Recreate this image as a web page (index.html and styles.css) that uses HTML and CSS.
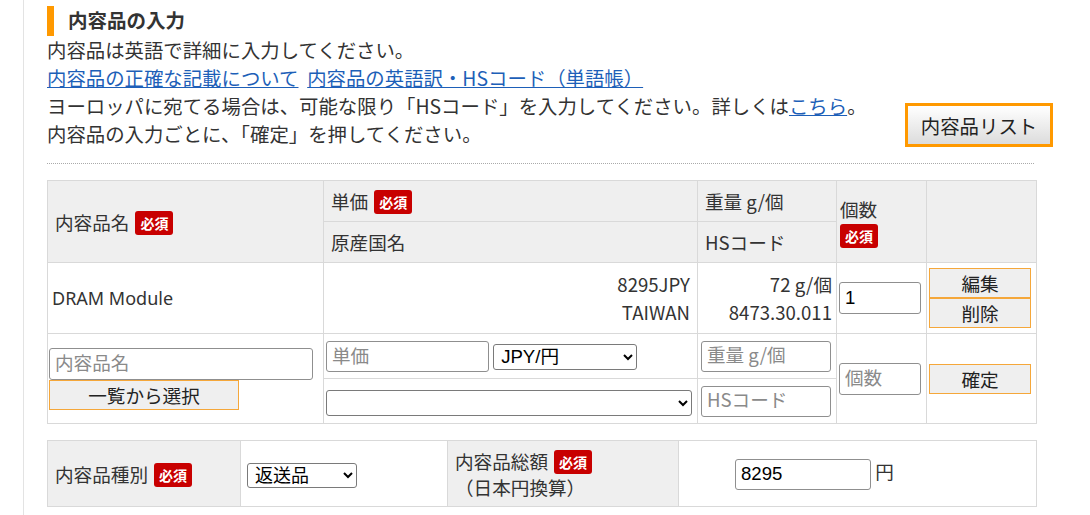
FILE: index.html
```html
<!DOCTYPE html>
<html lang="ja">
<head>
	<meta charset="utf-8">
	<title>内容品の入力</title>
	<link rel="stylesheet" href="styles.css">
</head>
<body>

<div class="page">
	<h2 class="ttl">内容品の入力</h2>

	<div class="intro">
		<div class="intro-text">
			<p>内容品は英語で詳細に入力してください。</p>
			<p><a href="#">内容品の正確な記載について</a>&nbsp; <a href="#">内容品の英語訳・HSコード（単語帳）</a></p>
			<p>ヨーロッパに宛てる場合は、可能な限り「HSコード」を入力してください。詳しくは<a href="#">こちら</a>。</p>
			<p>内容品の入力ごとに、「確定」を押してください。</p>
		</div>
		<button class="list-btn" type="button">内容品リスト</button>
	</div>

	<div class="divider"></div>

	<table class="items">
		<colgroup>
			<col class="c-name">
			<col class="c-price">
			<col class="c-weight">
			<col class="c-qty">
			<col class="c-act">
		</colgroup>
		<tr class="head1">
			<th rowspan="2">内容品名<span class="req">必須</span></th>
			<th>単価<span class="req">必須</span></th>
			<th>重量 g/個</th>
			<th rowspan="2" class="qty-head">個数<br><span class="req req-block">必須</span></th>
			<th rowspan="2"></th>
		</tr>
		<tr class="head2">
			<th>原産国名</th>
			<th>HSコード</th>
		</tr>
		<tr class="data">
			<td class="name">DRAM Module</td>
			<td class="num">8295JPY<br>TAIWAN</td>
			<td class="num num-w">72 g/個<br>8473.30.011</td>
			<td class="qty"><input class="inp inp-qty" type="text" value="1"></td>
			<td class="act">
				<button class="sub-btn" type="button">編集</button>
				<button class="sub-btn" type="button">削除</button>
			</td>
		</tr>
		<tr class="entry1">
			<td rowspan="2" class="name-entry">
				<input class="inp inp-name" type="text" placeholder="内容品名">
				<button class="sub-btn pick-btn" type="button">一覧から選択</button>
			</td>
			<td class="price-entry">
				<input class="inp inp-price" type="text" placeholder="単価">
				<select class="sel sel-cur"><option>JPY/円</option></select>
			</td>
			<td class="w-entry"><input class="inp inp-w" type="text" placeholder="重量 g/個"></td>
			<td rowspan="2" class="qty"><input class="inp inp-qty" type="text" placeholder="個数"></td>
			<td rowspan="2" class="act"><button class="sub-btn" type="button">確定</button></td>
		</tr>
		<tr class="entry2">
			<td class="price-entry"><select class="sel sel-country"><option></option></select></td>
			<td class="w-entry"><input class="inp inp-w inp-hs" type="text" placeholder="HSコード"></td>
		</tr>
	</table>

	<table class="total">
		<colgroup>
			<col class="t1">
			<col class="t2">
			<col class="t3">
			<col class="t4">
		</colgroup>
		<tr>
			<th>内容品種別<span class="req">必須</span></th>
			<td class="kind"><select class="sel sel-kind"><option>返送品</option></select></td>
			<th class="sum-head">内容品総額<span class="req">必須</span><br>（日本円換算）</th>
			<td class="sum"><input class="inp inp-sum" type="text" value="8295"> 円</td>
		</tr>
	</table>
</div>

<script>
	document.querySelectorAll('a').forEach(function(a){
		a.onclick = function(){ return false };
	});
</script>

</body>
</html>
```

FILE: styles.css
```css
html, body {
	margin: 0;
	padding: 0;
	background: #fff;
}
body {
	color: #333;
	font-family: "Noto Sans CJK JP", "Noto Sans", sans-serif;
	font-size: 18.6px;
}
.page {
	box-sizing: border-box;
	min-height: 515px;
	margin-left: 23px;
	padding: 6px 0 0 23px;
	border-left: 1px solid #e3e3e3;
}
.ttl {
	height: 30px;
	margin: 0;
	padding-left: 14px;
	font-size: 19.5px;
	font-weight: bold;
	line-height: 28px;
	color: #333;
	border-left: 7px solid #f90;
}
.intro {
	display: flex;
	justify-content: space-between;
	width: 1006px;
	font-size: 19.4px;
}
.intro p {
	margin: 0;
	line-height: 28px;
	white-space: nowrap;
}
.intro a {
	color: #1d5fb8;
	text-decoration: underline;
}
.list-btn {
	align-self: flex-end;
	box-sizing: border-box;
	width: 148px;
	height: 44px;
	margin-bottom: 1px;
	padding: 0;
	color: #222;
	font-family: inherit;
	font-size: 19.4px;
	background: linear-gradient(#fff, #dcdcdc);
	border: 3px solid #f90;
	border-radius: 0;
}
.divider {
	width: 987px;
	margin-top: 15px;
	border-top: 1px dotted #aaa;
}

table {
	width: 989px;
	border-collapse: collapse;
	table-layout: fixed;
}
th, td {
	padding: 0;
	border: 1px solid #d9d9d9;
	font-weight: normal;
	text-align: left;
	vertical-align: middle;
	line-height: 28px;
}
th {
	padding-left: 7px;
	background: #efefef;
}
.items {
	margin-top: 16px;
}
.c-name { width: 276px; }
.c-price { width: 374px; }
.c-weight { width: 139px; }
.c-qty { width: 90px; }
.c-act { width: 110px; }

.head1 { height: 41px; }
.head2 { height: 41px; }
.data { height: 71px; }
.entry1 { height: 45px; }
.entry2 { height: 45px; }

.req {
	display: inline-block;
	margin-left: 6px;
	padding: 2px 5px;
	color: #fff;
	font-size: 14px;
	font-weight: bold;
	line-height: 20px;
	vertical-align: 1px;
	background: #c80000;
	border-radius: 3px;
}
.req-block {
	margin-left: 0;
	margin-top: -3px;
}
.qty-head {
	padding-left: 3px;
	line-height: 26px;
}

.name {
	padding-left: 4px;
	font-family: "Noto Sans", "Noto Sans CJK JP", sans-serif;
	font-size: 18px;
}
.num {
	padding-right: 7px;
	text-align: right;
}
.num-w {
	padding-right: 4px;
}
.qty {
	padding-left: 2px;
}
.act {
	padding-left: 2px;
}

.inp {
	box-sizing: border-box;
	height: 32px;
	margin: 0;
	padding: 0 5px;
	color: #000;
	font-family: "Liberation Sans", "Noto Sans CJK JP", sans-serif;
	font-size: 18.6px;
	background: #fff;
	border: 1px solid #8f8f8f;
	border-radius: 3px;
}
.inp::placeholder {
	color: #8a8a8a;
	font-family: "Noto Sans CJK JP", sans-serif;
}
.inp-qty { width: 82px; }
.inp-name {
	display: block;
	width: 264px;
}
.inp-price {
	width: 163px;
	height: 31px;
	vertical-align: middle;
}
.inp-w {
	width: 130px;
	height: 31px;
}
.inp-sum {
	width: 136px;
	height: 31px;
	vertical-align: middle;
}

.sel {
	box-sizing: border-box;
	height: 26px;
	margin: 0;
	padding: 0 3px;
	color: #000;
	font-family: "Liberation Sans", "Noto Sans CJK JP", sans-serif;
	font-size: 18.6px;
	background: #fff;
	border: 1px solid #7a7a7a;
	border-radius: 3px;
	vertical-align: middle;
}
.sel-cur { width: 144px; }
.sel-country { width: 366px; }
.sel-kind {
	width: 110px;
	height: 25px;
	padding: 0 3px;
	font-family: "Liberation Sans", "Noto Sans CJK JP", sans-serif;
	font-size: 18px;
}

.sub-btn {
	display: block;
	box-sizing: border-box;
	width: 102px;
	height: 30px;
	margin: 0;
	padding: 0;
	color: #222;
	font-family: "Noto Sans CJK JP", sans-serif;
	font-size: 18.6px;
	line-height: 26px;
	background: #efefef;
	border: 1px solid #f5a73a;
	border-radius: 0;
}
.pick-btn {
	width: 190px;
}
.name-entry {
	padding-left: 1px;
}
.price-entry {
	padding-left: 2px;
}
.w-entry {
	padding-left: 3px;
}

.total {
	margin-top: 16px;
}
.total tr {
	height: 66px;
}
.t1 { width: 193px; }
.t2 { width: 207px; }
.t3 { width: 231px; }
.t4 { width: 358px; }
.kind {
	padding-left: 6px;
}
.sum-head {
	line-height: 25px;
}
.sum {
	padding-left: 56px;
	color: #333;
}
```
